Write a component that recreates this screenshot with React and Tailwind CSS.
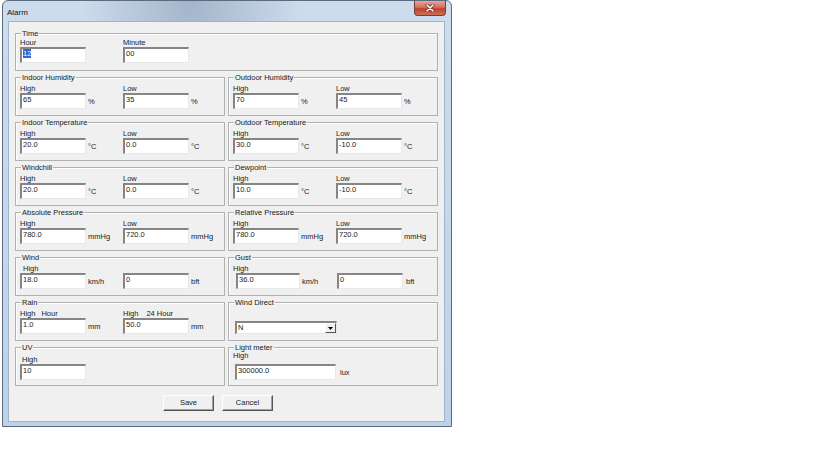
import React from 'react';

function Input({ value, w = 'w-[66px]', selected, className = '' }) {
  return (
    <div className={`h-[16px] ${w} ${className} shrink-0 bg-white border-t-2 border-l-2 border-t-[#858585] border-l-[#858585] border-b border-r border-b-[#e8e8e8] border-r-[#e8e8e8] pl-[1px] leading-[10px]`}>
      {selected ? <span className="bg-[#3366cc] text-white">{value}</span> : value}
    </div>
  );
}

function Group({ title, className = '', children }) {
  return (
    <div className={`border border-[#b1b1b1] shadow-[inset_1px_1px_0_#ffffff] shrink-0 ${className}`}>
      <div className="-mt-[5px] ml-[5px] w-fit bg-[#f0f0f0] px-[1px] leading-[9px]">{title}</div>
      {children}
    </div>
  );
}

function Field({ label, value, unit, rowH = 'h-[11px]', selected }) {
  return (
    <div className="w-[103px] shrink-0">
      <div className={`${rowH} flex items-end leading-[9px]`}>{label}</div>
      <div className="flex items-center">
        <Input value={value} selected={selected} />
        {unit && <span className="ml-[2px] pt-[1px]">{unit}</span>}
      </div>
    </div>
  );
}

function Pair({ title, high, low, unit }) {
  return (
    <Group title={title} className="h-[39px] w-[210px]">
      <div className="flex pl-[4px]">
        <Field label="High" value={high} unit={unit} />
        <Field label="Low" value={low} unit={unit} />
      </div>
    </Group>
  );
}

function Button({ children }) {
  return (
    <div className="h-[16px] w-[51px] flex items-center justify-center bg-[#f0f0f0] border-t border-l border-t-white border-l-white border-b border-r border-b-[#555555] border-r-[#555555] shadow-[inset_-1px_-1px_0_#a0a0a0]">
      {children}
    </div>
  );
}

export default function App() {
  return (
    <div className="w-[819px] h-[460px] bg-white font-['Liberation_Sans',Arial,sans-serif] text-[7.5px] text-[#1a1a1a]">
      <div className="ml-[2px] w-[450px] h-[427px] flex flex-col rounded-t-[6px] border border-[#5b6b80] bg-[radial-gradient(ellipse_at_42%_0%,#a3b5ca_0%,transparent_30%),linear-gradient(#cddcec,#bdd2e8)] px-[5px] pb-[4px] pr-[6px]">
        {/* title bar */}
        <div className="h-[20px] flex items-start shrink-0">
          <span className="mt-[7px] -ml-[1px] text-[8px] leading-[9px] text-[#111]">Alarm</span>
          <div className="ml-auto mr-[-1px] w-[32px] h-[15px] rounded-b-[4px] border border-t-0 border-[#7a3b33] bg-[linear-gradient(#e8a697,#d46e5e_45%,#c2412c_55%,#cf6d55)] flex items-center justify-center">
            <svg width="10" height="8" viewBox="0 0 10 8">
              <path d="M2 1 L8 7 M8 1 L2 7" stroke="#5a2a22" strokeWidth="3" strokeLinecap="round" />
              <path d="M2 1 L8 7 M8 1 L2 7" stroke="#ffffff" strokeWidth="1.6" strokeLinecap="round" />
            </svg>
          </div>
        </div>

        {/* client */}
        <div className="flex-1 bg-[#f0f0f0] border border-[#9fb3ca]">
          <div className="ml-[6px] w-[423px] mt-[11px] flex flex-col gap-[6px]">
            <Group title="Time" className="h-[38px] w-[423px]">
              <div className="flex pl-[4px]">
                <Field label="Hour" value="12" selected rowH="h-[9px]" />
                <Field label="Minute" value="00" rowH="h-[9px]" />
              </div>
            </Group>

            <div className="flex gap-[3px]">
              <Pair title="Indoor Humidity" high="65" low="35" unit="%" />
              <Pair title="Outdoor Humidity" high="70" low="45" unit="%" />
            </div>
            <div className="flex gap-[3px]">
              <Pair title="Indoor Temperature" high="20.0" low="0.0" unit="°C" />
              <Pair title="Outdoor Temperature" high="30.0" low="-10.0" unit="°C" />
            </div>
            <div className="flex gap-[3px]">
              <Pair title="Windchill" high="20.0" low="0.0" unit="°C" />
              <Pair title="Dewpoint" high="10.0" low="-10.0" unit="°C" />
            </div>
            <div className="flex gap-[3px]">
              <Pair title="Absolute Pressure" high="780.0" low="720.0" unit="mmHg" />
              <Pair title="Relative Pressure" high="780.0" low="720.0" unit="mmHg" />
            </div>

            <div className="flex gap-[3px]">
              <Group title="Wind" className="h-[39px] w-[210px]">
                <div className="flex pl-[4px]">
                  <Field label={<span className="pl-[3px]">High</span>} value="18.0" unit="km/h" />
                  <Field label="" value="0" unit="bft" />
                </div>
              </Group>
              <Group title="Gust" className="h-[39px] w-[210px]">
                <div className="flex pl-[4px]">
                  <div className="w-[104px] shrink-0">
                    <div className="h-[11px] flex items-end leading-[9px]">High</div>
                    <div className="flex items-center">
                      <Input value="36.0" w="w-[64px]" className="ml-[3px]" />
                      <span className="ml-[2px] pt-[1px]">km/h</span>
                    </div>
                  </div>
                  <div className="w-[100px] shrink-0">
                    <div className="h-[11px]" />
                    <div className="flex items-center">
                      <Input value="0" />
                      <span className="ml-[3px] pt-[1px]">bft</span>
                    </div>
                  </div>
                </div>
              </Group>
            </div>

            <div className="flex gap-[3px]">
              <Group title="Rain" className="h-[39px] w-[210px]">
                <div className="flex pl-[4px]">
                  <Field label={<span className="flex gap-[6px]"><span>High</span><span>Hour</span></span>} value="1.0" unit="mm" />
                  <Field label={<span className="flex gap-[8px]"><span>High</span><span>24 Hour</span></span>} value="50.0" unit="mm" />
                </div>
              </Group>
              <Group title="Wind Direct" className="h-[39px] w-[210px]">
                <div className="pl-[6px] pt-[14px]">
                  <div className="h-[13px] w-[102px] flex bg-white border-t-2 border-l-2 border-t-[#858585] border-l-[#858585] border-b border-r border-b-[#e8e8e8] border-r-[#e8e8e8]">
                    <span className="flex-1 pl-[1px] leading-[10px]">N</span>
                    <div className="w-[11px] h-[10px] flex items-center justify-center bg-[#f0f0f0] border-t border-l border-t-white border-l-white border-b border-r border-b-[#555555] border-r-[#555555]">
                      <svg width="5" height="3" viewBox="0 0 5 3">
                        <path d="M0 0 H5 L2.5 3 Z" fill="#000" />
                      </svg>
                    </div>
                  </div>
                </div>
              </Group>
            </div>

            <div className="flex gap-[3px]">
              <Group title="UV" className="h-[39px] w-[210px]">
                <div className="pl-[4px]">
                  <Field label={<span className="pl-[2px]">High</span>} value="10" rowH="h-[12px]" />
                </div>
              </Group>
              <Group title="Light meter" className="h-[39px] w-[210px]">
                <div className="pl-[4px]">
                  <div className="h-[8px] leading-[8px]">High</div>
                  <div className="flex items-center mt-[4px] ml-[2px]">
                    <Input value="300000.0" w="w-[101px]" />
                    <span className="ml-[4px] pt-[1px]">lux</span>
                  </div>
                </div>
              </Group>
            </div>

            <div className="flex gap-[8px] mt-[3px] ml-[148px]">
              <Button>Save</Button>
              <Button>Cancel</Button>
            </div>
          </div>
        </div>
      </div>
    </div>
  );
}
